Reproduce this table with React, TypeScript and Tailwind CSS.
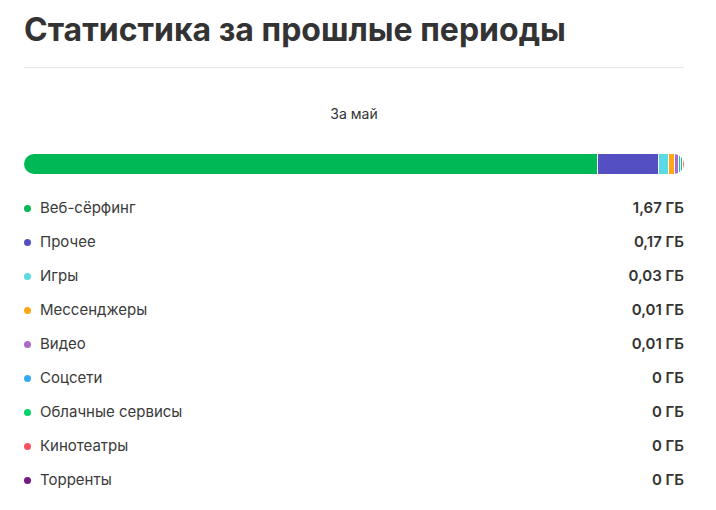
const SEGMENTS = [
  { color: "bg-[#00b956]", w: "w-[573px]" },
  { color: "bg-[#5450c4]", w: "w-[60px]" },
  { color: "bg-[#5bd9e5]", w: "w-[9px]" },
  { color: "bg-[#ffa717]", w: "w-[5px]" },
  { color: "bg-[#a86bc9]", w: "w-[3px]" },
  { color: "bg-[#35a9f5]", w: "w-[1px]" },
  { color: "bg-[#00d26a]", w: "w-[1px]" },
  { color: "bg-[#f3525e]", w: "flex-1" },
];

const ROWS = [
  { label: "Веб-сёрфинг", value: "1,67 ГБ", dot: "bg-[#00b956]" },
  { label: "Прочее", value: "0,17 ГБ", dot: "bg-[#5450c4]" },
  { label: "Игры", value: "0,03 ГБ", dot: "bg-[#5bd9e5]" },
  { label: "Мессенджеры", value: "0,01 ГБ", dot: "bg-[#ffa717]" },
  { label: "Видео", value: "0,01 ГБ", dot: "bg-[#a86bc9]" },
  { label: "Соцсети", value: "0 ГБ", dot: "bg-[#35a9f5]" },
  { label: "Облачные сервисы", value: "0 ГБ", dot: "bg-[#00d26a]" },
  { label: "Кинотеатры", value: "0 ГБ", dot: "bg-[#f3525e]" },
  { label: "Торренты", value: "0 ГБ", dot: "bg-[#731982]" },
];

export default function App() {
  return (
    <div className="w-[716px] h-[510px] bg-white pl-6 pr-8 pt-[10px] text-[#333] font-['Inter','Noto_Sans',sans-serif]">
      <h1 className="text-[32px] leading-[40px] font-bold text-[#333]">
        Статистика за прошлые периоды
      </h1>
      <div className="mt-[17px] h-px bg-[#e6e6e6]" />

      <p className="mt-[36px] text-center text-sm leading-5">За май</p>

      <div className="mt-[30px] flex h-5 gap-px overflow-hidden rounded-full">
        {SEGMENTS.map((s, i) => (
          <div key={i} className={`${s.color} ${s.w} shrink-0`} />
        ))}
      </div>

      <div className="mt-[17px]">
        {ROWS.map((row) => (
          <div key={row.label} className="flex h-[34px] items-center justify-between">
            <div className="flex items-center">
              <span className={`h-[7px] w-[7px] rounded-full ${row.dot}`} />
              <span className="ml-[9px] text-[15px] text-[#3a3a3a]">{row.label}</span>
            </div>
            <span className="text-[15px] font-semibold">{row.value}</span>
          </div>
        ))}
      </div>
    </div>
  );
}
